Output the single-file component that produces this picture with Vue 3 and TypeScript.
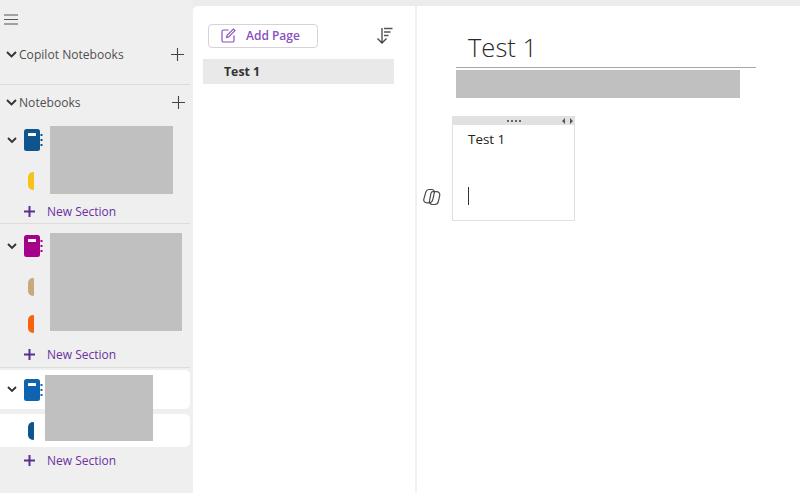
<script setup lang="ts">
interface Notebook {
  color: string
  rowClass: string
  sections: { color: string; cls: string }[]
  newClass: string
  active?: boolean
}
const notebooks: Notebook[] = [
  { color: '#0f548c', rowClass: 'nb-a', sections: [{ color: '#f8c21c', cls: 'sec-a' }], newClass: 'new-a' },
  { color: '#a6008b', rowClass: 'nb-b', sections: [{ color: '#c8a97e', cls: 'sec-b' }, { color: '#f7630c', cls: 'sec-c' }], newClass: 'new-b' },
  { color: '#0f63b0', rowClass: 'nb-c', sections: [{ color: '#0f548c', cls: 'sec-d' }], newClass: 'new-c', active: true },
]
</script>

<template>
  <div class="app">
    <div class="topstrip"></div>
    <div class="body">
      <aside class="sidebar">
        <div class="burger-row">
          <svg width="14" height="11" viewBox="0 0 14 11"><path d="M0 1h14M0 5.500h14M0 10h14" stroke="#555" stroke-width="1.100" fill="none" /></svg>
        </div>
        <div class="group copilot">
          <div class="head copilot-head">
            <svg class="chev" width="11" height="7" viewBox="0 0 11 7"><path d="M1 1l4.500 4.500L10 1" stroke="#333" stroke-width="1.900" fill="none" /></svg>
            <span class="head-text">Copilot Notebooks</span>
            <svg class="plus" width="13" height="13" viewBox="0 0 13 13"><path d="M6.500 0v13M0 6.500h13" stroke="#444" stroke-width="1.100" /></svg>
          </div>
        </div>
        <div class="head nb-head">
          <svg class="chev" width="11" height="7" viewBox="0 0 11 7"><path d="M1 1l4.500 4.500L10 1" stroke="#333" stroke-width="1.900" fill="none" /></svg>
          <span class="head-text">Notebooks</span>
          <svg class="plus" width="13" height="13" viewBox="0 0 13 13"><path d="M6.500 0v13M0 6.500h13" stroke="#444" stroke-width="1.100" /></svg>
        </div>
        <div v-for="(nb, i) in notebooks" :key="i" class="notebook" :class="{ last: i === notebooks.length - 1 }">
          <div class="nb-row" :class="[nb.rowClass, { active: nb.active }]">
            <svg class="chev nb-chev" width="10" height="7" viewBox="0 0 10 7"><path d="M1 1l4 4 4-4" stroke="#333" stroke-width="1.900" fill="none" /></svg>
            <svg class="nb-icon" width="19" height="22" viewBox="0 0 19 22">
              <rect x="0" y="0" width="16" height="22" rx="2.500" :fill="nb.color" />
              <rect x="4" y="4" width="8" height="3" rx="0.500" fill="#fff" />
              <path d="M17.500 5v2M17.500 10v2M17.500 15v2" :stroke="nb.color" stroke-width="2" />
            </svg>
          </div>
          <div v-for="(s, j) in nb.sections" :key="j" class="sec-row" :class="[s.cls, { active: nb.active }]">
            <span class="tab" :style="{ background: s.color }"></span>
          </div>
          <div class="new-row" :class="nb.newClass">
            <svg width="11" height="11" viewBox="0 0 11 11"><path d="M5.500 0v11M0 5.500h11" stroke="#5c2e91" stroke-width="2" /></svg>
            <span class="new-text">New Section</span>
          </div>
        </div>
        <div class="redact r1"></div>
        <div class="redact r2"></div>
        <div class="redact r3"></div>
      </aside>

      <section class="pages">
        <div class="pages-top">
          <button class="add-page">
            <svg width="15" height="15" viewBox="0 0 15 15" fill="none">
              <path d="M7.500 2H2.500A1.500 1.500 0 0 0 1 3.500v9A1.500 1.500 0 0 0 2.500 14h9a1.500 1.500 0 0 0 1.500-1.500V7.500" stroke="#8a4fc0" stroke-width="1.200" />
              <path d="M5.500 9.500l.6-2.200L12.400 1l1.600 1.600-6.300 6.300z" stroke="#8a4fc0" stroke-width="1.100" />
            </svg>
            <span>Add Page</span>
          </button>
          <svg class="sort" width="17" height="17" viewBox="0 0 17 17" fill="none">
            <path d="M6 1v15M1.500 11.500L6 16l4.500-4.500" stroke="#444" stroke-width="1.300" />
            <path d="M8 1.500h8.500M8 5h6.500M8 8.500h4.500" stroke="#555" stroke-width="1.300" />
          </svg>
        </div>
        <div class="page-item">Test 1</div>
      </section>

      <main class="canvas">
        <h1 class="title">Test 1</h1>
        <div class="rule"></div>
        <div class="date"></div>
        <div class="note-wrap">
          <svg class="copilot-icon" width="18" height="18" viewBox="0 0 18 18" fill="none" stroke="#4a4a4a" stroke-width="1.200">
            <path d="M5.800 1.500h2.900c2 0 3.100 1.500 2.600 3.400L9.700 11.800c-.5 1.800-1.900 3-3.700 3H3.900c-2.300 0-3.600-1.800-3-3.900L2.900 3.800c.4-1.400 1.500-2.300 2.900-2.300z" />
            <path d="M9.800 3.600h3.700c2.400 0 3.700 1.800 3.200 4L15.300 13.700c-.4 1.700-1.800 2.800-3.500 2.800H9.300c-2.100 0-3.300-1.600-2.800-3.600L8 5.200c.3-1 1-1.600 1.800-1.600z" />
          </svg>
          <div class="note">
            <div class="note-bar">
              <span class="dots"><i></i><i></i><i></i><i></i></span>
              <span class="arrows">
                <svg width="11" height="6" viewBox="0 0 11 6"><path d="M3 0v6L0 3zM8 0v6l3-3z" fill="#555" /></svg>
              </span>
            </div>
            <div class="note-text">Test 1</div>
            <div class="caret"></div>
          </div>
        </div>
      </main>
    </div>
  </div>
</template>

<style>
html, body { margin: 0; background: #fff; }
</style>

<style scoped>
.app {
  width: 800px;
  height: 493px;
  overflow: hidden;
  display: flex;
  flex-direction: column;
  background: #efefef;
  font-family: "Open Sans", "Noto Sans", sans-serif;
}
.topstrip { height: 6px; flex: none; background: #ececec; }
.body { flex: 1; display: flex; min-height: 0; }

.sidebar {
  position: relative;
  width: 193px;
  flex: none;
  display: flex;
  flex-direction: column;
  background: #efefef;
  margin-top: -6px;
}
.burger-row { height: 26px; margin-top: 6px; padding-left: 4px; display: flex; align-items: center; flex: none; }
.head { display: flex; align-items: center; padding-left: 6px; color: #555; flex: none; }
.copilot { padding-bottom: 8px; border-bottom: 1px solid #dcdcdc; margin-right: 3px; flex: none; }
.copilot-head { height: 44px; }
.nb-head { height: 34px; }
.head-text { margin-left: 2px; font-size: 12.1px; color: #505050; }
.plus { margin-left: auto; margin-right: 8px; }
.copilot-head .plus { margin-right: 6px; }

.notebook { border-bottom: 1px solid #dcdcdc; padding-bottom: 2px; margin-right: 3px; flex: none; }
.notebook.last { border-bottom: 0; }
.nb-row { display: flex; align-items: center; padding-left: 7px; }
.nb-a { height: 42px; }
.nb-b { height: 44px; }
.nb-c { height: 39px; margin-top: 2px; }
.nb-chev { margin-right: 7px; }
.nb-row.active, .sec-row.active { background: #fff; border-radius: 0 5px 5px 0; }
.sec-row { display: flex; align-items: center; padding-left: 28px; }
.sec-a { height: 40px; }
.sec-b { height: 38px; }
.sec-c { height: 36px; }
.sec-d { height: 33px; margin-top: 5px; }
.tab { width: 6px; height: 18px; border-radius: 5px 1px 1px 5px; display: block; }
.new-row { height: 20px; display: flex; align-items: center; padding-left: 24px; }
.new-b { margin-top: 2px; margin-bottom: 1px; }
.new-c { margin-top: 3px; }
.new-text { margin-left: 12px; font-size: 12px; color: #6b2fa0; }

.redact { position: absolute; background: #c0c0c0; }
.r1 { left: 50px; top: 126px; width: 123px; height: 68px; }
.r2 { left: 50px; top: 233px; width: 132px; height: 98px; }
.r3 { left: 45px; top: 375px; width: 108px; height: 66px; }

.pages {
  width: 222px;
  flex: none;
  background: #fff;
  border-right: 2px solid #f0f0f0;
  box-sizing: content-box;
  border-top-left-radius: 5px;
  padding-top: 18px;
}
.pages-top { display: flex; align-items: center; padding: 0 22px 0 15px; height: 23px; }
.add-page {
  width: 110px;
  height: 24px;
  box-sizing: border-box;
  background: #fff;
  border: 1px solid #d6d2da;
  border-radius: 4px;
  display: flex;
  align-items: center;
  padding: 0 0 0 12px;
  font-family: inherit;
  font-size: 12px;
  font-weight: 600;
  color: #8a4fc0;
}
.add-page span { margin-left: 10px; }
.sort { margin-left: auto; }
.page-item {
  margin: 12px 21px 0 10px;
  height: 25px;
  line-height: 25px;
  background: #e9e9e9;
  padding-left: 21px;
  font-size: 12.3px;
  font-weight: 700;
  color: #333;
}

.canvas { flex: 1; background: #fff; padding: 0 0 0 39px; min-width: 0; }
.title {
  margin: 22px 0 0 12px;
  height: 39px;
  line-height: 38px;
  font-size: 25.5px;
  font-weight: 300;
  color: #2a2a2a;
}
.rule { width: 300px; height: 1px; background: #a8a8a8; }
.date { margin-top: 2px; width: 284px; height: 28px; background: #c0c0c0; }
.note-wrap { position: relative; margin: 18px 0 0 -4px; }
.copilot-icon { position: absolute; left: -29px; top: 72px; }
.note {
  width: 123px;
  height: 105px;
  box-sizing: border-box;
  border: 1px solid #e1e1e1;
  position: relative;
}
.note-bar { height: 8px; background: #e1e1e1; display: flex; align-items: center; justify-content: center; position: relative; }
.dots { display: flex; gap: 2px; }
.dots i { width: 2px; height: 2px; background: #666; display: block; }
.arrows { position: absolute; right: 1px; top: 0; height: 8px; display: flex; align-items: center; }
.note-text { margin: 5px 0 0 15px; font-size: 13.4px; line-height: 18px; color: #222; }
.caret { position: absolute; left: 15px; top: 70px; width: 1px; height: 18px; background: #333; }
</style>
